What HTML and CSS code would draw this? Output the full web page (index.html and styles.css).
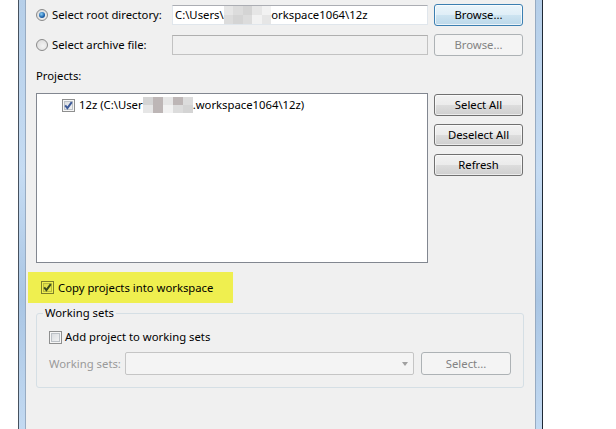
FILE: index.html
```html
<!DOCTYPE html>
<html>
<head>
<meta charset="utf-8">
<link rel="stylesheet" href="styles.css">
</head>
<body>
<div class="frame">
  <div class="dialog">
    <div class="row">
      <label class="opt"><span class="radio on"></span><span>Select root directory:</span></label>
      <div class="field"><span>C:\Users\</span><span class="blur b1"><i class="c2"></i><i class="c3"></i><i class="c1"></i><i class="c2"></i><i class="c4"></i><i class="c3"></i><i class="c1"></i><i class="c3"></i><i class="c4"></i><i class="c2"></i></span><span>orkspace1064\12z</span></div>
      <button class="btn focus">Browse...</button>
    </div>
    <div class="row second">
      <label class="opt"><span class="radio"></span><span>Select archive file:</span></label>
      <div class="field disabled"></div>
      <button class="btn dis">Browse...</button>
    </div>
    <div class="plabel">Projects:</div>
    <div class="projects">
      <div class="list">
        <div class="item"><span class="cb"><svg viewBox="0 0 13 13" width="13" height="13"><path d="M3.2 6.4 L5.4 9.2 L9.8 3.2" fill="none" stroke="#3d5a98" stroke-width="2"/></svg></span><span class="itext"><span>12z (C:\User</span><span class="blur b2"><i class="c1"></i><i class="c5"></i><i class="c2"></i><i class="c5"></i><i class="c3"></i><i class="c2"></i><i class="c5"></i><i class="c4"></i><i class="c3"></i><i class="c1"></i></span><span>.workspace1064\12z)</span></span></div>
      </div>
      <div class="side">
        <button class="btn">Select All</button>
        <button class="btn">Deselect All</button>
        <button class="btn">Refresh</button>
      </div>
    </div>
    <div class="highlight">
      <span class="cb hl"><svg viewBox="0 0 13 13" width="13" height="13"><path d="M3.2 6.4 L5.4 9.2 L9.8 3.2" fill="none" stroke="#3b4a1c" stroke-width="2"/></svg></span><span>Copy projects into workspace</span>
    </div>
    <fieldset class="group">
      <legend>Working sets</legend>
      <div class="addrow"><span class="cb"></span><span>Add project to working sets</span></div>
      <div class="wsrow">
        <span class="wslabel">Working sets:</span>
        <div class="combo"><span class="arrow"></span></div>
        <button class="btn dis sel">Select...</button>
      </div>
    </fieldset>
  </div>
</div>
</body>
</html>
```
FILE: styles.css
```css
html, body {
  margin: 0;
  padding: 0;
  background: #ffffff;
}
body {
  font-family: "Noto Sans", "Open Sans", sans-serif;
  font-size: 11.3px;
  color: #000;
  line-height: 16px;
}
.frame {
  margin-left: 18px;
  width: 525px;
  height: 429px;
  box-sizing: border-box;
  border-left: 1px solid #46515e;
  border-right: 1px solid #1f2935;
  padding: 0 6px;
  background: linear-gradient(to bottom, #b6cfe9, #c6dcf3 40%, #aac6e4 70%, #c3daf2);
}
.dialog {
  height: 100%;
  box-sizing: border-box;
  background: #f0f0f0;
  border-left: 1px solid #97abc2;
  border-right: 1px solid #97abc2;
  padding-top: 4px;
}
.row {
  display: flex;
  align-items: center;
  height: 22px;
  margin-left: 10px;
}
.row.second { margin-top: 8px; }
.opt {
  width: 136px;
  display: flex;
  align-items: center;
  gap: 4px;
}
.radio {
  width: 12px;
  height: 12px;
  box-sizing: border-box;
  border-radius: 50%;
  border: 1px solid #8a8a8a;
  background: radial-gradient(circle at 60% 60%, #f4f4f4, #d6d6d6);
  display: inline-flex;
  align-items: center;
  justify-content: center;
}
.radio.on::after {
  content: "";
  width: 6px;
  height: 6px;
  border-radius: 50%;
  background: radial-gradient(circle at 40% 35%, #8ad0f8, #1a5fa8 60%, #1b3f78);
}
.field {
  width: 256px;
  height: 20px;
  box-sizing: border-box;
  background: #fff;
  border: 1px solid #e0e6ec;
  border-top-color: #abadb3;
  display: flex;
  align-items: center;
  padding-left: 2px;
  white-space: nowrap;
  overflow: hidden;
}
.field.disabled {
  background: #f0f0f0;
  border-color: #c2c2c2;
  border-top-color: #afafaf;
}
.blur {
  display: inline-grid;
  grid-template-columns: repeat(5, 10px);
}
.blur.b1 { grid-auto-rows: 10px; grid-template-columns: repeat(5, 9.5px); }
.blur.b2 { grid-auto-rows: 8px; }
.blur i { display: block; }
.c1 { background: #d4d4d4; }
.c2 { background: #e6e6e6; }
.c3 { background: #dcdcdc; }
.c4 { background: #f2f2f2; }
.c5 { background: #bdb6b6; }
.btn {
  font: inherit;
  color: #000;
  width: 89px;
  height: 22px;
  box-sizing: border-box;
  border: 1px solid #707070;
  border-radius: 3px;
  background: linear-gradient(to bottom, #f2f2f2 0%, #ebebeb 50%, #dddddd 50%, #cfcfcf 100%);
  box-shadow: inset 0 0 0 1px rgba(255,255,255,0.6);
  padding: 0;
  margin: 0;
}
.row .btn { margin-left: 6px; }
.btn.focus {
  border-color: #3c7fb1;
  background: linear-gradient(to bottom, #ebf5fb 0%, #dfeef7 50%, #cde4f1 50%, #bcd8ea 100%);
  box-shadow: inset 0 0 0 1px rgba(255,255,255,0.7);
}
.btn.dis {
  border-color: #adb2b5;
  background: #f4f4f4;
  color: #838383;
  box-shadow: none;
}
.plabel {
  margin: 12px 0 0 10px;
}
.projects {
  display: flex;
  align-items: flex-start;
  margin: 9px 0 0 10px;
}
.list {
  width: 392px;
  height: 170px;
  box-sizing: border-box;
  border: 1px solid #828790;
  background: #fff;
  padding: 3px 0 0 25px;
}
.item {
  display: flex;
  align-items: center;
  gap: 4px;
  white-space: nowrap;
}
.itext {
  display: flex;
  align-items: center;
}
.cb {
  width: 13px;
  height: 13px;
  box-sizing: border-box;
  border: 1px solid #8e8f8f;
  background: linear-gradient(135deg, #d6d9dd, #f7f7f7);
  box-shadow: inset 0 0 0 1px #f6f6f6, inset 0 0 0 2px #bcc1c6;
  position: relative;
  flex: none;
}
.cb svg {
  position: absolute;
  left: -1px;
  top: -1px;
}
.cb.hl {
  border-color: #7d7f2a;
  background: linear-gradient(135deg, #dcdc48, #ecec52);
  box-shadow: inset 0 0 0 1px #f0f050, inset 0 0 0 2px #b9bb3e;
}
.side {
  display: flex;
  flex-direction: column;
  gap: 8px;
  margin-left: 6px;
  margin-top: 1px;
}
.highlight {
  margin: 9px 0 0 2px;
  width: 205px;
  height: 31px;
  box-sizing: border-box;
  background: #efef4f;
  display: flex;
  align-items: center;
  gap: 4px;
  padding-left: 13px;
}
.group {
  margin: 2px 0 0 10px;
  width: 488px;
  height: 83px;
  box-sizing: border-box;
  border: 1px solid #d5dfe5;
  border-radius: 3px;
  padding: 0 0 0 12px;
  min-width: 0;
}
.group legend {
  padding: 0 2px;
  margin-left: -6px;
  line-height: 16px;
}
.addrow {
  display: flex;
  align-items: center;
  gap: 3px;
  margin-top: 8px;
}
.wsrow {
  display: flex;
  align-items: center;
  margin-top: 7px;
}
.wslabel {
  color: #9a9a9a;
  width: 76px;
  white-space: nowrap;
}
.combo {
  width: 289px;
  height: 23px;
  box-sizing: border-box;
  border: 1px solid #c5c5c5;
  border-radius: 2px;
  background: #f4f4f4;
  display: flex;
  align-items: center;
  justify-content: flex-end;
  padding-right: 5px;
}
.arrow {
  width: 0;
  height: 0;
  border-left: 3.5px solid transparent;
  border-right: 3.5px solid transparent;
  border-top: 4px solid #a0a0a0;
}
.btn.sel {
  margin-left: 7px;
  width: 90px;
  height: 23px;
}
```
